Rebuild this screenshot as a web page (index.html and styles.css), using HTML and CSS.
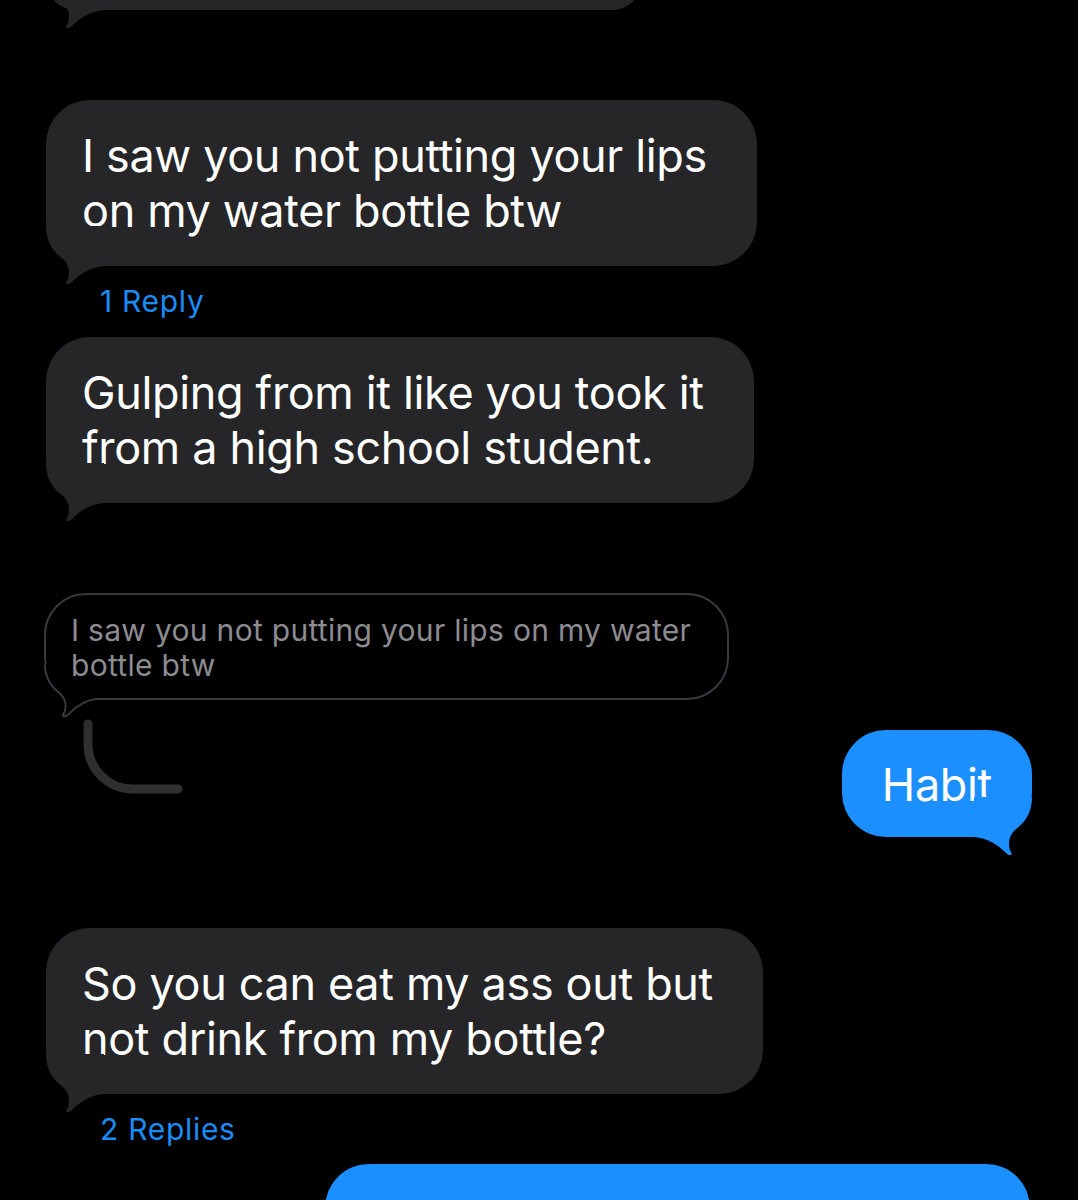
FILE: index.html
```html
<!DOCTYPE html>
<html lang="en">
<head>
<meta charset="utf-8">
<title>Messages</title>
<link rel="stylesheet" href="styles.css">
</head>
<body>
<main class="thread">
  <div class="bubble recv frag">
    <svg class="tail" viewBox="0 0 60 60" aria-hidden="true"><path d="M0,0 C0,18 9,27 17,33 C21,37 23,41 23,46 C23,51 22,54 20,57 C21,59 24,58 26,56 C34,48 44,41 58,40 L58,0 Z"/></svg>
  </div>

  <div class="bubble recv b1">
    <p class="text">I saw you not putting your lips<br>on my water bottle btw</p>
    <svg class="tail" viewBox="0 0 60 60" aria-hidden="true"><path d="M0,0 C0,18 9,27 17,33 C21,37 23,41 23,46 C23,51 22,54 20,57 C21,59 24,58 26,56 C34,48 44,41 58,40 L58,0 Z"/></svg>
  </div>
  <div class="replies r1">1 Reply</div>

  <div class="bubble recv b2">
    <p class="text">Gulping from it like you took it<br>from a high school student.</p>
    <svg class="tail" viewBox="0 0 60 60" aria-hidden="true"><path d="M0,0 C0,18 9,27 17,33 C21,37 23,41 23,46 C23,51 22,54 20,57 C21,59 24,58 26,56 C34,48 44,41 58,40 L58,0 Z"/></svg>
  </div>

  <div class="quote">
    <svg class="qtail" viewBox="0 0 60 60" aria-hidden="true">
      <path class="qfill" d="M0,0 C0,18 9,27 17,33 C21,37 23,41 23,46 C23,51 22,54 20,57 C21,59 24,58 26,56 C34,48 44,41 58,40 L58,0 Z"/>
      <path class="qline" d="M1,0 C1,18 10,27 18,33 C22,37 24,41 24,46 C24,51 23,54 21,57 C22,59 25,58 27,56 C35,48 45,40 58,39"/>
    </svg>
    <p class="quote-text">I saw you not putting your lips on my water<br>bottle btw</p>
  </div>

  <div class="row">
    <svg class="connector" viewBox="0 0 140 80" aria-hidden="true"><path d="M42,5 V25 A45,45 0 0 0 87,70 H132"/></svg>
    <div class="bubble sent habit">
      <p class="text">Habit</p>
      <svg class="tail" viewBox="0 0 60 60" aria-hidden="true"><path d="M0,0 C0,18 9,27 17,33 C21,37 23,41 23,46 C23,51 22,54 20,57 C21,59 24,58 26,56 C34,48 44,41 58,40 L58,0 Z"/></svg>
    </div>
  </div>

  <div class="bubble recv b3">
    <p class="text">So you can eat my ass out but<br>not drink from my bottle?</p>
    <svg class="tail" viewBox="0 0 60 60" aria-hidden="true"><path d="M0,0 C0,18 9,27 17,33 C21,37 23,41 23,46 C23,51 22,54 20,57 C21,59 24,58 26,56 C34,48 44,41 58,40 L58,0 Z"/></svg>
  </div>
  <div class="replies r2">2 Replies</div>

  <div class="bubble sent last"></div>
</main>
</body>
</html>
```

FILE: styles.css
```css
html, body {
  margin: 0;
  padding: 0;
  background: #000;
  overflow: hidden;
}

body {
  font-family: Inter, "Noto Sans", "Liberation Sans", sans-serif;
  color: #fff;
}

.thread {
  display: flex;
  flex-direction: column;
  align-items: flex-start;
  padding: 0 46px;
}

.bubble {
  position: relative;
  border-radius: 44px;
  padding: 28px 50px 28px 36px;
}

.bubble .text {
  position: relative;
  margin: 0;
  font-size: 45px;
  line-height: 55px;
  letter-spacing: -0.35px;
  white-space: nowrap;
}

.recv {
  background: #262629;
}

.recv .tail {
  position: absolute;
  left: 0;
  top: calc(100% - 40px);
  width: 60px;
  height: 60px;
  fill: #262629;
}

.sent {
  background: #1c8fff;
  align-self: flex-end;
}

.sent .tail {
  position: absolute;
  right: 0;
  top: calc(100% - 40px);
  width: 60px;
  height: 60px;
  fill: #1c8fff;
  transform: scaleX(-1);
}

.frag {
  width: 596px;
  height: 60px;
  margin-top: -50px;
  padding: 0;
  box-sizing: border-box;
}

.b1 {
  margin-top: 90px;
}

.replies {
  margin: 17px 0 0 54px;
  font-size: 30px;
  line-height: 36px;
  letter-spacing: 0.7px;
  color: #1a8cf6;
}

.b2 {
  margin-top: 18px;
}

.quote {
  position: relative;
  margin: 90px 0 0 -2px;
  border: 2px solid #3a3a3d;
  border-radius: 42px;
  padding: 18px 36px 15px 25px;
}

.quote-text {
  position: relative;
  margin: 0;
  font-size: 30px;
  line-height: 35px;
  letter-spacing: 0.3px;
  color: #8c8c91;
  white-space: nowrap;
}

.qtail {
  position: absolute;
  left: -2px;
  top: calc(100% - 34px);
  width: 54px;
  height: 54px;
  overflow: visible;
}

.qfill {
  fill: #000;
}

.qline {
  fill: none;
  stroke: #3a3a3d;
  stroke-width: 2.2;
}

.row {
  align-self: stretch;
  display: flex;
  justify-content: space-between;
  align-items: flex-start;
  margin-top: 19px;
}

.connector {
  width: 140px;
  height: 80px;
  fill: none;
  stroke: #2f2f32;
  stroke-width: 9;
  stroke-linecap: round;
}

.habit {
  margin-top: 11px;
  padding: 27px 40px 25px 40px;
}

.b3 {
  margin-top: 91px;
}

.r2 {
  margin-top: 17px;
}

.last {
  width: 705px;
  height: 120px;
  margin-top: 17px;
  margin-right: 2px;
  padding: 0;
  box-sizing: border-box;
}
```
